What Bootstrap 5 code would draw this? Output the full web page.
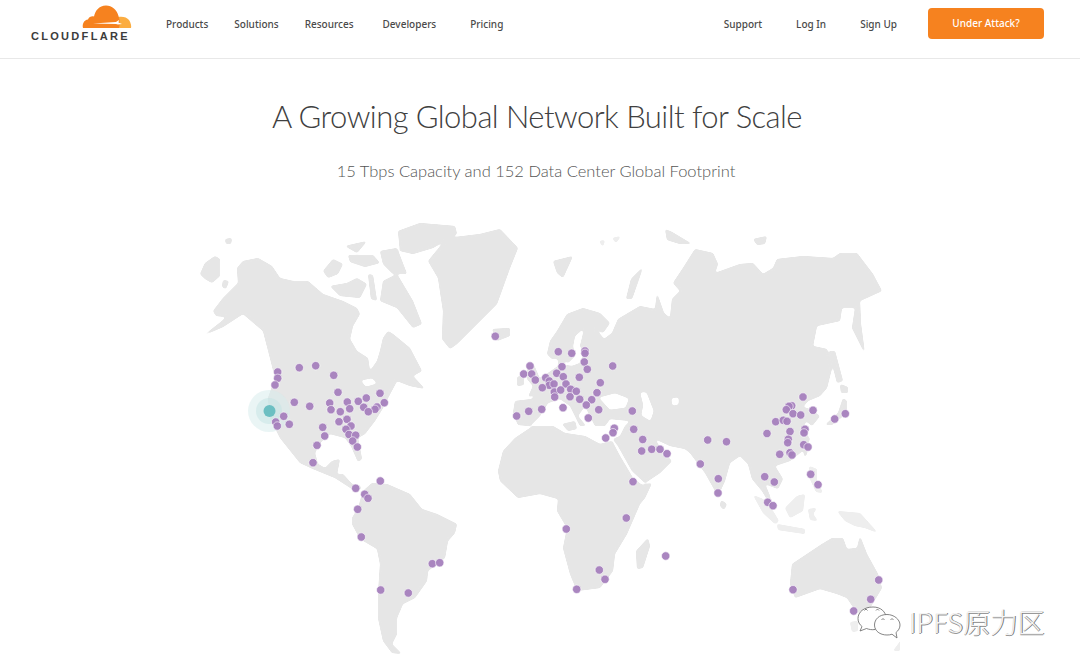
<!DOCTYPE html>
<html lang="en">
<head>
    <meta charset="UTF-8">
    <meta name="viewport" content="width=device-width, initial-scale=1.0">
    <title>Cloudflare Network</title>
    <link href="https://cdn.jsdelivr.net/npm/bootstrap@5.3.0/dist/css/bootstrap.min.css" rel="stylesheet">
    <style>
        html, body { height: 100%; overflow: hidden; }
        body { background: #fff; font-family: "Noto Sans", sans-serif; color: #404040; position: relative; }
        .top-bar { height: 59px; border-bottom: 1px solid #e8e8e8; padding: 0 36px 11px 31px; }
        .brand-box { width: 103px; margin-right: 32px; padding-top: 5px; }
        .brand-box svg { display: block; margin-left: 51px; }
        .brand-word { font-family: "Liberation Sans", sans-serif; font-weight: 700; font-size: 11px; line-height: 8px; letter-spacing: 2.3px; color: #3c3c3c; white-space: nowrap; margin-top: 4px; }
        .top-link { font-size: 10px; font-weight: 500; color: #4a4a4a; text-decoration: none; white-space: nowrap; padding-top: 1px; }
        .gap-a { margin-right: 26px; }
        .gap-b { margin-right: 29px; }
        .gap-c { margin-right: 34px; }
        .gap-d { margin-right: 34px; }
        .gap-e { margin-right: 31px; }
        .attack-btn { width: 116px; height: 31px; background: #f6821f; border: 0; border-radius: 4px; color: #fff; font-size: 10px; font-weight: 500; padding: 0; }
        .attack-btn:hover { background: #f6821f; color: #fff; }
        .page-title { font-family: Lato, sans-serif; font-size: 31px; font-weight: 300; color: #404040; margin: 37px 0 0; padding-right: 6px; line-height: 40px; letter-spacing: -.55px; }
        .page-sub { font-family: Lato, sans-serif; font-size: 16.5px; font-weight: 300; color: #555; margin: 23px 0 0; padding-right: 8px; line-height: 24px; }
        .map-box { width: 720px; height: 460px; margin: 23px auto 0; }
        .land { fill: #e6e6e6; filter: url(#softEdge); }
        .pale-land { fill: #eeeeee; filter: url(#softEdge); }
        .sea { fill: #fff; stroke: #fff; stroke-width: 1; stroke-linejoin: round; filter: url(#softEdge); }
        .site-dot { fill: #a57fbd; stroke: #fff; stroke-width: .6; fill-opacity: .95; }
        .wm-mark { position: absolute; left: 857px; top: 606px; display: flex; align-items: flex-start; gap: 8px; }
        .wm-text { font-family: "Noto Sans CJK SC", sans-serif; font-weight: 300; font-size: 27px; line-height: 32px; color: #f4f4f4; letter-spacing: .2px; text-shadow: 1px 0 0 #777, 0 1px 0 #999; white-space: nowrap; }
    </style>
</head>
<body>
<nav class="top-bar d-flex align-items-center">
    <a class="brand-box align-self-start text-decoration-none" href="#">
        <svg width="50" height="23" viewBox="0 0 50 23">
            <path fill="#fbad41" d="M36 12 C40 11 45 12 47 15 C49 18 49.500 21 49 23 H34 Z"/>
            <path fill="#f6821f" d="M1 23 C0 19 2 15 6 14.500 C7 11.500 10 11 12 11.500 C13 6 17 .5 24 .5 C30 .5 35 5 36.500 11 C38 15 38 20 37 23 Z"/>
            <path fill="#fff" d="M11 18.500 L34 17 L37 15 L36.500 17.500 L40 19 L36 19.500 L34 19 Z"/>
        </svg>
        <div class="brand-word">CLOUDFLARE</div>
    </a>
    <a class="top-link gap-a" href="#">Products</a>
    <a class="top-link gap-a" href="#">Solutions</a>
    <a class="top-link gap-b" href="#">Resources</a>
    <a class="top-link gap-d" href="#">Developers</a>
    <a class="top-link" href="#">Pricing</a>
    <div class="ms-auto d-flex align-items-center">
        <a class="top-link gap-c" href="#">Support</a>
        <a class="top-link gap-c" href="#">Log In</a>
        <a class="top-link gap-e" href="#">Sign Up</a>
        <button type="button" class="btn attack-btn">Under Attack?</button>
    </div>
</nav>

<h1 class="page-title text-center">A Growing Global Network Built for Scale</h1>
<p class="page-sub text-center">15 Tbps Capacity and 152 Data Center Global Footprint</p>

<div class="map-box">
    <svg id="worldMap" width="720" height="460" viewBox="180 205 720 460">
        <defs>
            <!-- blur then sharpen the alpha so the hand traced coasts get round corners -->
            <filter id="softEdge" x="-5%" y="-5%" width="110%" height="110%">
                <feGaussianBlur stdDeviation="1.3"/>
                <feComponentTransfer>
                    <feFuncA type="linear" slope="5" intercept="-1.7"/>
                </feComponentTransfer>
            </filter>
        </defs>
        <g class="land">
            <!-- North and Central America -->
            <polygon points="200,336 208,331 222,320 226,316 216,315 213,310 223,297 238,282 237,267 243,260 258,257 272,265 280,277 293,280 308,280 323,293 343,300 357,307 360,313 353,325 350,338 357,350 368,357 370,370 377,360 380,350 383,337 388,330 393,333 410,347 422,370 413,375 425,388 410,385 397,380 388,397 383,407 375,420 365,433 358,437 362,458 358,461 351,445 345,437 330,433 320,442 315,452 318,463 325,467 332,460 340,458 337,473 343,473 352,483 362,486 357,492 352,488 335,477 313,468 300,462 280,437 270,417 268,397 275,377 270,357 263,330 243,313 223,326"/>
            <!-- Arctic islands -->
            <polygon points="398,230 420,222 455,225 457,233 433,247 413,253 400,250"/>
            <polygon points="383,280 397,273 413,300 422,323 413,327 397,307 380,300"/>
            <polygon points="323,270 333,258 343,263 338,273 328,277"/>
            <polygon points="345,245 367,240 357,252"/>
            <polygon points="348,254 373,254 380,262 365,266 350,261"/>
            <polygon points="330,285 347,282 357,277 367,283 360,297 340,295"/>
            <polygon points="368,273 373,274 377,300 371,298"/>
            <polygon points="380,250 397,247 407,273 393,273 383,263"/>
            <polygon points="200,273 205,262 215,255 220,258 220,275 212,282 205,278"/>
            <polygon points="223,279 229,280 226,288 222,286"/>
            <polygon points="225,238 232,237 231,243 226,243"/>
            <!-- Greenland and Iceland -->
            <polygon points="428,260 447,237 480,233 500,228 518,247 510,267 497,303 480,320 457,343 450,348 442,338 443,310 438,277"/>
            <polygon points="492,328 510,327 510,335 497,340"/>
            <!-- South America -->
            <polygon points="352,517 358,507 363,490 372,482 387,483 410,493 422,508 437,513 457,523 455,532 448,540 445,557 428,570 427,580 415,597 403,603 397,617 397,633 392,643 402,653 392,652 383,640 378,617 378,593 380,563 377,548 360,538 352,523"/>
            <!-- Africa -->
            <polygon points="498,470 503,450 515,437 533,425 553,425 565,432 585,435 600,443 612,440 620,455 633,477 642,484 652,482 645,497 640,503 627,533 615,553 613,570 600,587 577,590 570,573 563,547 567,527 557,510 558,498 540,493 518,497 500,480"/>
            <polygon points="648,537 650,545 643,567 637,568 636,550"/>
            <!-- Eurasia -->
            <polygon points="518,424 513,412 515,400 532,398 538,390 533,382 548,372 558,365 558,355 563,352 565,364 572,365 580,362 584,352 580,345 583,333 583,328 575,335 573,345 575,355 568,362 562,358 552,358 547,353 550,340 557,330 567,313 583,307 600,312 610,322 603,332 596,328 604,338 612,332 618,318 640,305 655,308 657,292 664,312 670,317 672,298 680,290 673,282 683,267 695,248 713,252 718,263 715,272 740,263 753,262 763,273 773,267 777,258 803,255 833,257 840,252 857,252 873,273 882,290 860,300 861,323 865,353 852,327 855,307 842,307 840,320 817,325 813,345 827,348 832,367 827,387 820,395 808,400 803,406 810,408 820,415 812,425 806,420 803,428 810,438 805,448 790,460 775,465 783,478 778,488 765,483 770,495 772,507 768,500 762,490 752,478 748,463 740,455 730,462 725,480 718,495 705,472 690,452 685,448 670,445 655,438 662,450 672,460 660,472 645,482 632,470 618,445 613,438 620,435 625,425 630,420 610,418 605,425 595,425 585,405 578,415 586,425 580,425 570,405 560,398 548,402 540,415 530,425"/>
            <polygon points="527,366 534,364 540,378 543,392 528,396 533,385 527,378"/>
            <polygon points="517,376 524,374 524,384 517,385"/>
            <polygon points="562,423 575,420 577,428 568,430"/>
            <polygon points="553,260 573,255 563,277 557,272"/>
            <polygon points="626,298 631,278 643,266 638,281 632,298"/>
            <polygon points="665,228 672,231 692,243 680,243 667,239"/>
            <polygon points="753,238 767,235 765,243 757,244"/>
            <polygon points="829,350 835,350 843,380 837,382"/>
            <polygon points="840,383 848,386 848,392 841,392"/>
            <polygon points="843,397 847,400 847,412 832,424 825,424 838,412"/>
            <polygon points="803,449 808,450 805,457"/>
            <polygon points="721,499 727,503 724,509 720,505"/>
            <!-- Australia -->
            <polygon points="792,563 822,543 832,537 843,537 847,548 857,547 860,535 867,553 878,573 882,587 870,607 857,612 847,597 837,593 820,588 795,597 790,583"/>
        </g>
        <g class="pale-land">
            <polygon points="599,240 605,239 603,246"/>
            <polygon points="612,237 621,235 616,242"/>
            <polygon points="809,465 817,468 817,480 823,492 816,491 810,478"/>
            <!-- Indonesia, New Guinea, Tasmania, New Zealand -->
            <polygon points="753,494 763,498 773,510 779,520 775,523 763,512"/>
            <polygon points="777,523 805,528 805,533 778,529"/>
            <polygon points="785,507 797,495 805,493 803,510 790,517"/>
            <polygon points="808,508 817,507 813,513 818,520 810,519"/>
            <polygon points="837,510 860,512 878,532 865,527 855,525 845,520"/>
            <polygon points="850,621 858,620 858,630 852,631"/>
            <polygon points="893,650 905,634 911,636 899,650"/>
        </g>
        <g class="sea">
            <polygon points="600,397 615,393 628,398 625,406 610,408"/>
            <polygon points="641,392 646,392 653,410 650,419 642,414 644,404"/>
            <polygon points="672,398 678,397 678,403 673,404"/>
            <polygon points="362,380 372,378 376,382 366,385"/>
        </g>
        <circle cx="269" cy="410" r="21" fill="#d5ecec" fill-opacity=".5"/>
        <circle cx="269" cy="410" r="13" fill="#c4e3e3" fill-opacity=".5"/>
        <g id="siteDots"></g>
        <circle cx="269.500" cy="410" r="6" fill="#6cbfc2"/>
    </svg>
</div>

<div class="wm-mark">
    <svg width="44" height="33" viewBox="0 0 44 33" fill="none" stroke="#666" stroke-width=".8">
        <path fill="#fff" d="M16 1 C7 1 1 6 1 12.500 C1 16 2.500 18.500 5 20.500 L3 25 L9.500 22.500 C12 23.500 15 24 18 23.500 L29 12 C29 6 24 1 16 1 Z"/>
        <path fill="#fff" d="M30 8.500 C22 8.500 17.500 13.500 17.500 19 C17.500 25 23 29 30 29 C32 29 33.500 28.800 35 28.200 L40 32 L39 26.500 C41.500 24.500 43 22 43 19 C43 13.500 37 8.500 30 8.500 Z"/>
        <path d="M7.500 4.500 L9 3 L10.500 4.500 M19 4.500 L20.500 3 L22 4.500 M24.500 14 L26 12.500 L27.500 14 M33.500 14 L35 12.500 L36.500 14"/>
    </svg>
    <span class="wm-text">IPFS原力区</span>
</div>

<script>
    const sites = [
        [277.7,371],[277.7,377.3],[275,384],[299.3,366.7],[315.7,364.7],[333.7,374.3],[338,391.3],[294.3,401.3],[309.7,405.3],[329.7,402],
        [331,408.7],[340.3,410.7],[347.3,401],[349.7,407.7],[358.3,400.3],[366.3,397],[380,392.3],[384.3,401.7],[363.7,406.3],[377,406],
        [375,408.3],[368.3,410.7],[347,418.3],[339,420.7],[351,425],[346,428.3],[322.7,426.3],[324.7,435],[349,433.5],[355.7,434.2],
        [352.7,440],[357.3,446],[283.7,415.3],[289.3,423.3],[275.7,421],[277.3,425],[317,444.3],[313,461.7],[495.3,335.3],
        [380.3,480],[355.7,487.3],[364.7,493.3],[368,497.3],[357.7,508.3],[361.3,536],[432.3,562.7],[439.7,561.7],[380.7,589],[408.3,592],
        [516.7,415],[528.7,410.3],[530,365],[523.7,373],[531.7,373],[535.3,379],[541.7,408.3],
        [558.3,350.7],[571.7,352.3],[585,350],[585,352.3],[584.3,361],[587.3,368.3],[612.7,365],[562,365.7],[556.7,372.3],[563.3,375.7],
        [579.3,376.3],[600.3,381.7],[545.7,376.7],[549.3,380],[549.3,384.3],[542.3,386.7],[554,383],[566,383],[554.3,391],[560.7,389],
        [570.7,388.3],[576.3,390.3],[554.7,396],[570,395.7],[579.7,398.3],[591.7,398.7],[597,391.7],[586.3,404],[598.7,408.7],[563,406.7],
        [588.3,417],[632.3,410],[614.3,427.3],[613,431.7],[605.7,437],[633.7,428.3],[642.7,438.5],[641.7,450],[651.7,448.3],[660,448.3],[667,452.7],
        [633,480.7],[626.3,517],[566.3,528],[599.3,569],[605,578.3],[576.7,588.3],[665.7,555],
        [707.7,439],[726.5,440.7],[700.3,463],[718.3,477.7],[718,492],
        [803,396],[791.7,404.7],[789,405.3],[786.3,408.7],[793,412.7],[800.7,414],[813,409.3],[834.7,418],[845.3,412.7],[775.7,420.7],
        [783.3,419.3],[787,420.3],[767,432.5],[790,430.5],[805,428.3],[804,431.9],[788.3,438.3],[787.7,441.7],[803.7,443.7],[808,446],
        [779.7,453.3],[790,451.7],[792,454],[764.7,475.7],[774.3,481],[810.7,473.3],[818,483.7],[767.7,501.3],[773,504.7],
        [878.7,579],[870.7,598.3],[793,588.7],[853.7,610]
    ];

    let list = "";
    sites.forEach(site => {
        list += `<circle class="site-dot" cx="${site[0]}" cy="${site[1]}" r="4.2"></circle>`;
    });
    document.getElementById("siteDots").innerHTML = list;
</script>
<script src="https://cdn.jsdelivr.net/npm/bootstrap@5.3.0/dist/js/bootstrap.bundle.min.js"></script>
</body>
</html>
